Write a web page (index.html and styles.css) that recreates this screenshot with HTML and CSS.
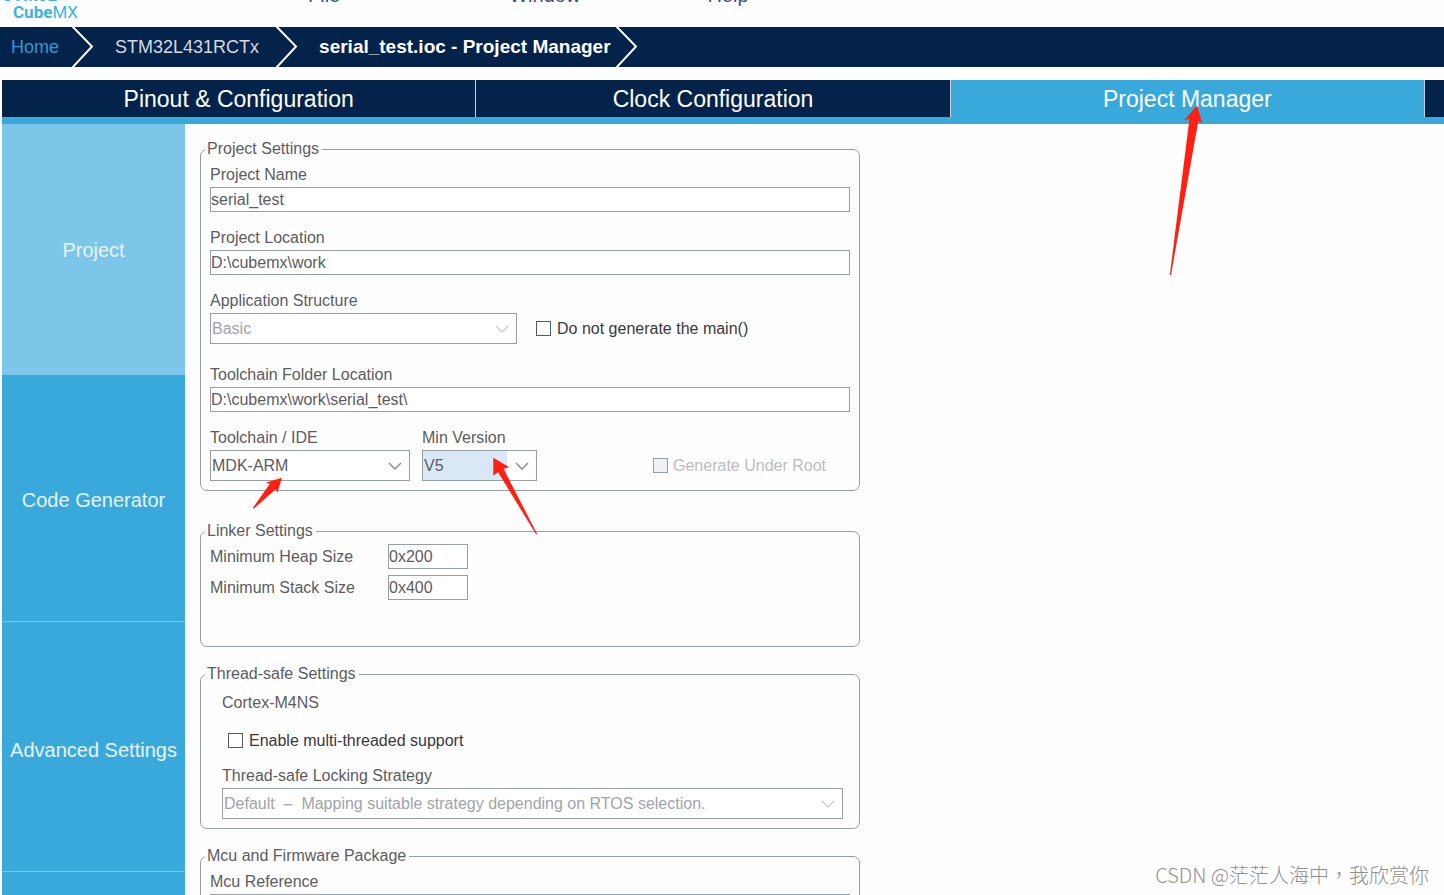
FILE: index.html
```
<!DOCTYPE html>
<html lang="en">
<head>
  <meta charset="UTF-8">
  <meta name="viewport" content="width=device-width, initial-scale=1.0">
  <title>STM32CubeMX - serial_test.ioc</title>
  <link rel="stylesheet" href="styles.css">
</head>
<body>

  <header class="topbar">
    <div class="logo">
      <div><b>STM</b>32</div>
      <div class="logo-name"><b>Cube</b>MX</div>
    </div>
    <nav class="menu">
      <button type="button">File</button>
      <button type="button">Window</button>
      <button type="button">Help</button>
    </nav>
  </header>

  <nav class="breadcrumb">
    <a class="home" href="#">Home</a>
    <svg class="crumb-sep" viewBox="0 0 22 40"><path d="M0 -1 L20 19.5 L0 41"/></svg>
    <a class="device" href="#">STM32L431RCTx</a>
    <svg class="crumb-sep" viewBox="0 0 22 40"><path d="M0 -1 L20 19.5 L0 41"/></svg>
    <a class="current" href="#">serial_test.ioc - Project Manager</a>
    <svg class="crumb-sep" viewBox="0 0 22 40"><path d="M0 -1 L20 19.5 L0 41"/></svg>
  </nav>

  <nav class="tabs">
    <button type="button" class="tab">Pinout &amp; Configuration</button>
    <button type="button" class="tab">Clock Configuration</button>
    <button type="button" class="tab active">Project Manager</button>
    <button type="button" class="tab tab-more" aria-label="Tools"></button>
  </nav>

  <div class="content">
    <nav class="sidebar">
      <button type="button" class="side-item active">Project</button>
      <button type="button" class="side-item">Code Generator</button>
      <button type="button" class="side-item">Advanced Settings</button>
      <button type="button" class="side-item" aria-label="More"></button>
    </nav>

    <form class="settings">
      <fieldset class="project">
        <legend>Project Settings</legend>
        <div class="fields">
          <div class="field">
            <label for="projectName">Project Name</label>
            <input type="text" id="projectName" value="serial_test">
          </div>
          <div class="field">
            <label for="projectLocation">Project Location</label>
            <input type="text" id="projectLocation" value="D:\cubemx\work">
          </div>
          <div class="row structure-row">
            <div class="field">
              <label for="appStructure">Application Structure</label>
              <div class="combo combo-structure">
                <select id="appStructure" disabled><option>Basic</option></select>
                <svg viewBox="0 0 14 8"><path d="M1 1 L7 7 L13 1"/></svg>
              </div>
            </div>
            <label class="check"><input type="checkbox">Do not generate the main()</label>
          </div>
          <div class="field">
            <label for="toolchainFolder">Toolchain Folder Location</label>
            <input type="text" id="toolchainFolder" value="D:\cubemx\work\serial_test\">
          </div>
          <div class="row toolchain-row">
            <div class="field">
              <label for="toolchain">Toolchain / IDE</label>
              <div class="combo combo-toolchain">
                <select id="toolchain"><option>MDK-ARM</option></select>
                <svg viewBox="0 0 14 8"><path d="M1 1 L7 7 L13 1"/></svg>
              </div>
            </div>
            <div class="field">
              <label for="minVersion">Min Version</label>
              <div class="combo combo-version">
                <select id="minVersion"><option>V5</option></select>
                <svg viewBox="0 0 14 8"><path d="M1 1 L7 7 L13 1"/></svg>
              </div>
            </div>
            <label class="check check-root"><input type="checkbox" disabled>Generate Under Root</label>
          </div>
        </div>
      </fieldset>

      <fieldset class="linker">
        <legend>Linker Settings</legend>
        <div class="sizes">
          <label for="heapSize">Minimum Heap Size</label>
          <input type="text" id="heapSize" value="0x200">
          <label for="stackSize">Minimum Stack Size</label>
          <input type="text" id="stackSize" value="0x400">
        </div>
      </fieldset>

      <fieldset class="thread">
        <legend>Thread-safe Settings</legend>
        <div class="thread-body">
          <p>Cortex-M4NS</p>
          <label class="check"><input type="checkbox">Enable multi-threaded support</label>
          <div class="field">
            <label for="locking">Thread-safe Locking Strategy</label>
            <div class="combo">
              <select id="locking" disabled><option>Default &nbsp;–&nbsp; Mapping suitable strategy depending on RTOS selection.</option></select>
              <svg viewBox="0 0 14 8"><path d="M1 1 L7 7 L13 1"/></svg>
            </div>
          </div>
        </div>
      </fieldset>

      <fieldset>
        <legend>Mcu and Firmware Package</legend>
        <div class="fields">
          <div class="field">
            <label for="mcuReference">Mcu Reference</label>
            <input type="text" id="mcuReference">
          </div>
        </div>
      </fieldset>
    </form>
  </div>

  <!-- red pointers over the tab and the two combos -->
  <svg class="arrows" width="1444" height="895" viewBox="0 0 1444 895">
    <path d="M1197 105.5 L1202.3 123.5 L1198.3 121 L1171 275 L1169.8 275 L1189.5 118.5 L1184 120.5 Z"/>
    <path d="M282 477.7 L277.3 493 L276 489 L253.7 508.7 L253 507.7 L269.7 484 L266 482.5 Z"/>
    <path d="M493.3 457.7 L509.3 467.3 L503.5 468.7 L537.3 534.3 L536 534.3 L498 472 L493.3 475.7 Z"/>
  </svg>

  <div class="watermark">CSDN @茫茫人海中，我欣赏你</div>

</body>
</html>
```

FILE: styles.css
```
* {
  box-sizing: border-box;
}

body {
  margin: 0;
  height: 100vh;
  overflow: hidden;
  position: relative;
  background: #fefefe;
  color: #5c5c60;
  font-family: "Liberation Sans", Arial, sans-serif;
  font-size: 16px;
  line-height: 20px;
}

button,
input,
select {
  font: inherit;
  color: inherit;
  border: none;
  border-radius: 0;
  margin: 0;
  padding: 0;
  background: none;
}

/* top bar, scrolled partly out of view */
.topbar {
  display: flex;
  height: 27px;
  overflow: hidden;
}

.logo {
  width: 308px;
  margin-top: -13px;
  padding-left: 2px;
  color: #3cb4e6;
  font-family: Roboto, "Liberation Sans", sans-serif;
  font-size: 17px;
  line-height: 17px;
}

.logo-name {
  padding-left: 11px;
}

.menu {
  display: flex;
  align-items: flex-start;
  gap: 169px;
  margin-top: -17px;
  color: #3c4f86;
  font-size: 20px;
  line-height: 24px;
}

.menu button:last-child {
  margin-left: -42px;
}

.breadcrumb {
  display: flex;
  align-items: center;
  height: 40px;
  background: #03234b;
  font-size: 18px;
}

.breadcrumb a {
  color: #d5dae2;
  text-decoration: none;
  padding: 0 17px 0 21px;
}

.breadcrumb .home {
  color: #3498cf;
  padding: 0 13px 0 11px;
}

.breadcrumb .current {
  color: white;
  font-weight: bold;
  font-size: 19px;
  padding-right: 5px;
}

.crumb-sep {
  width: 22px;
  height: 40px;
  fill: none;
  stroke: white;
  stroke-width: 2;
}

.tabs {
  display: flex;
  margin: 13px 0 0 2px;
  border-bottom: 7px solid #39a9dc;
}

.tab {
  flex: 1;
  height: 37px;
  background: #03234b;
  color: white;
  font-size: 23px;
  border-right: 1px solid #c8d0da;
}

.tab.active {
  background: #39a9dc;
}

.tab-more {
  flex: 0 0 19px;
  border-right: none;
}

.content {
  display: flex;
  margin-left: 2px;
}

.sidebar {
  display: flex;
  flex-direction: column;
  width: 183px;
}

.side-item {
  height: 250px;
  padding-top: 6px;
  background: #39a9dc;
  border-bottom: 1px solid #7dc7ea;
  color: #e6f5fc;
  font-size: 20px;
}

.side-item.active {
  height: 251px;
  padding-top: 2px;
  background: #7cc6e9;
}

.side-item.active + .side-item {
  height: 247px;
  padding-top: 3px;
}

.settings {
  flex: 1;
  max-width: 675px;
  padding: 15px 0 0 15px;
}

fieldset {
  min-width: 0;
  margin: 0 0 17px;
  padding: 0 4px 9px;
  border: 1px solid #979fa6;
  border-radius: 7px;
}

legend {
  padding: 0 3px 0 2px;
}

.project {
  margin-bottom: 30px;
}

.linker {
  min-height: 126px;
}

.fields {
  display: flex;
  flex-direction: column;
  gap: 16px;
  padding: 6px 5px 0;
}

.field {
  display: flex;
  flex-direction: column;
  gap: 2px;
}

input[type="text"] {
  width: 100%;
  height: 25px;
  border: 1px solid #979fa6;
  background: white;
}

.row {
  display: flex;
  align-items: flex-end;
}

.structure-row {
  gap: 19px;
  margin-bottom: 5px;
}

.toolchain-row {
  gap: 12px;
}

.combo {
  display: grid;
  align-items: center;
  border: 1px solid #979fa6;
  background: white;
}

.combo select,
.combo svg {
  grid-area: 1 / 1;
}

.combo select {
  appearance: none;
  width: 100%;
  height: 29px;
  padding-left: 1px;
}

.combo select:disabled {
  color: #a0a4aa;
  opacity: 1;
}

.combo svg {
  justify-self: end;
  width: 14px;
  height: 8px;
  margin-right: 7px;
  fill: none;
  stroke: #85898d;
  stroke-width: 1.4;
  pointer-events: none;
}

.combo select:disabled + svg {
  stroke: #c9ccd0;
}

.combo-structure {
  width: 307px;
}

.combo-toolchain {
  width: 200px;
}

.combo-version {
  width: 115px;
}

.combo-version select {
  background: #d9e8f6;
  border-right: 29px solid white;
}

.check {
  display: flex;
  align-items: center;
  gap: 6px;
  height: 31px;
  color: #38383c;
}

.check input {
  appearance: none;
  width: 15px;
  height: 15px;
  border: 1px solid #55585c;
  background: white;
}

.check-root {
  margin: 0 24px 0 auto;
  gap: 5px;
  color: #bcbcbf;
}

.check-root input {
  border-color: #979fa6;
  background: #f0f1f4;
}

.sizes {
  display: grid;
  grid-template-columns: 178px 80px;
  align-items: center;
  gap: 6px 0;
  padding: 3px 5px 0;
}

.thread-body {
  padding: 9px 12px 0 17px;
}

.thread-body p {
  margin: 0 0 12px;
}

.thread-body .check {
  padding-left: 6px;
  margin-bottom: 10px;
}

.arrows {
  position: absolute;
  left: 0;
  top: 0;
  fill: #ff2012;
  pointer-events: none;
}

.watermark {
  position: absolute;
  right: 15px;
  bottom: 6px;
  color: #909090;
  font-family: "Noto Sans CJK TC", "Noto Sans CJK SC", sans-serif;
  font-size: 20px;
  font-weight: 300;
  line-height: 28px;
}
```
